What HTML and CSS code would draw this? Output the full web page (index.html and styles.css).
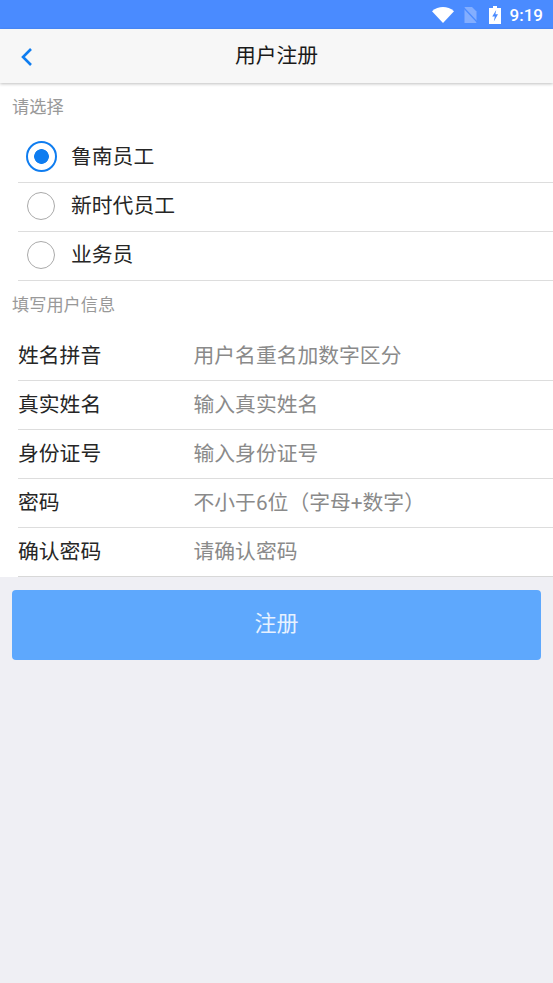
FILE: index.html
```html
<!DOCTYPE html>
<html lang="zh">
<head>
<meta charset="utf-8">
<title>用户注册</title>
<link rel="stylesheet" href="styles.css">
</head>
<body>
<div class="statusbar">
  <svg class="ic-wifi" width="22" height="16" viewBox="0 0 22 16"><path d="M0 4.200 C6.500-1.400 15.500-1.400 22 4.200 L11 16Z" fill="#fff"/></svg>
  <svg class="ic-sim" width="15" height="16" viewBox="0 0 15 16"><path d="M1.500 0H9l4.500 4.500V16H1.500Z" fill="#83aeff"/><path d="M0 0l15 16" stroke="#4a8bff" stroke-width="1.400"/></svg>
  <svg class="ic-batt" width="12" height="18" viewBox="0 0 12 18"><path d="M4 0h4v2h4v16H0V2h4Z" fill="#fff"/><path d="M7.200 4 3.200 10.500H5.800L4.800 15.500 9 8.200H6.400Z" fill="#4a8bff"/></svg>
  <span class="time">9:19</span>
</div>
<header class="navbar">
  <svg class="back" width="14" height="20" viewBox="0 0 14 20"><path d="M11 2 3 10l8 8" fill="none" stroke="#0f7df0" stroke-width="2.600"/></svg>
  <h1>用户注册</h1>
</header>
<main>
  <div class="section-title first">请选择</div>
  <ul class="list">
    <li class="radio-row"><span class="radio on"></span><span class="radio-text">鲁南员工</span></li>
    <li class="radio-row"><span class="radio"></span><span class="radio-text">新时代员工</span></li>
    <li class="radio-row"><span class="radio"></span><span class="radio-text">业务员</span></li>
  </ul>
  <div class="section-title">填写用户信息</div>
  <ul class="list form">
    <li class="field"><span class="label">姓名拼音</span><span class="ph">用户名重名加数字区分</span></li>
    <li class="field"><span class="label">真实姓名</span><span class="ph">输入真实姓名</span></li>
    <li class="field"><span class="label">身份证号</span><span class="ph">输入身份证号</span></li>
    <li class="field"><span class="label">密码</span><span class="ph">不小于6位（字母+数字）</span></li>
    <li class="field"><span class="label">确认密码</span><span class="ph">请确认密码</span></li>
  </ul>
  <button class="submit" type="button">注册</button>
</main>
</body>
</html>
```
FILE: styles.css
```css
* { box-sizing: border-box; margin: 0; padding: 0; }
html, body { height: 100%; }
body {
  background: #efeff4;
  font-family: Roboto, "Noto Sans CJK SC", sans-serif;
  color: #262626;
  overflow: hidden;
}
.statusbar {
  height: 29px;
  background: #4a8bff;
  display: flex;
  align-items: center;
  justify-content: flex-end;
  padding-right: 10px;
  color: #fff;
}
.ic-wifi { margin-right: 9px; }
.ic-sim { margin-right: 11px; }
.ic-batt { margin-right: 9px; }
.time { font-size: 17px; font-weight: 500; }
.navbar {
  height: 54px;
  padding-bottom: 5px;
  background: #f7f7f7;
  box-shadow: 0 1px 3px rgba(0,0,0,.25);
  position: relative;
  display: flex;
  align-items: center;
  justify-content: center;
}
.navbar h1 { font-size: 20.800px; font-weight: 400; color: #1a1a1a; }
.back { position: absolute; left: 20px; top: 18px; }
main { display: flex; flex-direction: column; }
.section-title {
  height: 51px;
  background: #fff;
  padding-left: 12px;
  padding-top: 13px;
  font-size: 17.200px;
  line-height: 22px;
  color: #999;
}
.list { list-style: none; background: #fff; padding-left: 18px; }
.radio-row, .field {
  height: 49px;
  border-bottom: 1px solid #ddd;
  display: flex;
  align-items: center;
  font-size: 20.800px;
}
.radio-row { padding-bottom: 3px; }
.field { padding-bottom: 5px; }
.radio-text { margin-bottom: 3px; }
.radio {
  width: 28px; height: 28px;
  margin-left: 9px; margin-right: 16px;
  border-radius: 50%;
  border: 1.500px solid #aaa;
  flex: none;
}
.radio.on {
  width: 31px; height: 31px;
  margin-left: 8px; margin-right: 14px;
  border: 2px solid #0f7df0;
  background: radial-gradient(circle, #0f7df0 0 7px, transparent 7.700px);
}
.label { width: 175.500px; }
.ph { color: #8a8a8a; }
.form .field:last-child { border-bottom-color: #d8d8d8; }
.submit {
  margin: 13px 12px 0;
  height: 70px;
  padding-bottom: 8px;
  background: #5ea8fd;
  border: 0;
  border-radius: 4px;
  color: #e6f1ff;
  font: inherit;
  font-size: 22px;
}
```
